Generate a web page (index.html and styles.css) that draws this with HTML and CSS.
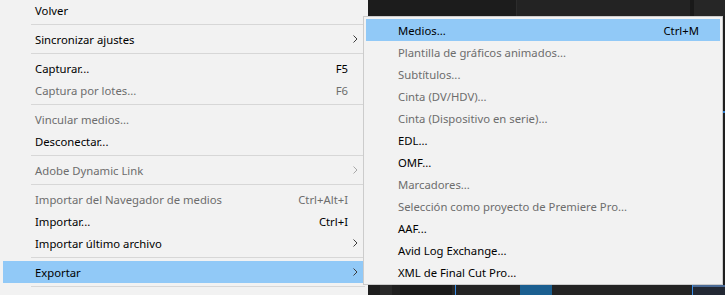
FILE: index.html
```html
<!DOCTYPE html>
<html lang="es">
<head>
<meta charset="utf-8">
<title>Menú Archivo</title>
<link rel="stylesheet" href="styles.css">
</head>
<body>
<div class="app">
  <div class="strip strip-top">
    <div class="pane t1"></div>
    <div class="pane t2"></div>
    <div class="pane t3"></div>
    <div class="pane t4"></div>
    <div class="pane t5"></div>
  </div>
  <div class="middle">
    <div class="middle-fill"></div>
    <div class="edge"><span class="edge-mark"></span></div>
  </div>
  <div class="strip strip-bottom">
    <div class="pane b0"></div>
    <div class="pane b1"></div>
    <div class="pane b2"></div>
    <div class="pane b3"></div>
    <div class="pane b4"></div>
    <div class="pane b5"></div>
    <div class="pane b6"></div>
    <div class="pane b7"></div>
    <div class="pane b8"></div>
    <div class="pane b9"></div>
    <div class="pane b10"></div>
  </div>
</div>

<div class="menu menu-main">
  <div class="item"><span class="label">Volver</span><span class="arrow"></span></div>
  <div class="sep"></div>
  <div class="item"><span class="label">Sincronizar ajustes</span><span class="arrow"><svg width="5" height="8" viewBox="0 0 5 8"><path d="M0.5 0.5 L4 4 L0.5 7.5" fill="none" stroke="#3c3c3c" stroke-width="1"/></svg></span></div>
  <div class="sep"></div>
  <div class="item"><span class="label">Capturar...</span><span class="key">F5</span><span class="arrow"></span></div>
  <div class="item disabled"><span class="label">Captura por lotes...</span><span class="key">F6</span><span class="arrow"></span></div>
  <div class="sep"></div>
  <div class="item disabled"><span class="label">Vincular medios...</span><span class="arrow"></span></div>
  <div class="item"><span class="label">Desconectar...</span><span class="arrow"></span></div>
  <div class="sep"></div>
  <div class="item disabled"><span class="label">Adobe Dynamic Link</span><span class="arrow"><svg width="5" height="8" viewBox="0 0 5 8"><path d="M0.5 0.5 L4 4 L0.5 7.5" fill="none" stroke="#a8a8a8" stroke-width="1"/></svg></span></div>
  <div class="sep"></div>
  <div class="item disabled"><span class="label">Importar del Navegador de medios</span><span class="key">Ctrl+Alt+I</span><span class="arrow"></span></div>
  <div class="item"><span class="label">Importar...</span><span class="key">Ctrl+I</span><span class="arrow"></span></div>
  <div class="item"><span class="label">Importar último archivo</span><span class="arrow"><svg width="5" height="8" viewBox="0 0 5 8"><path d="M0.5 0.5 L4 4 L0.5 7.5" fill="none" stroke="#3c3c3c" stroke-width="1"/></svg></span></div>
  <div class="sep"></div>
  <div class="item active"><span class="label">Exportar</span><span class="arrow"><svg width="5" height="8" viewBox="0 0 5 8"><path d="M0.5 0.5 L4 4 L0.5 7.5" fill="none" stroke="#3c3c3c" stroke-width="1"/></svg></span></div>
  <div class="sep"></div>
</div>

<div class="menu menu-sub">
  <div class="item active"><span class="label">Medios...</span><span class="key">Ctrl+M</span><span class="arrow"></span></div>
  <div class="item disabled"><span class="label">Plantilla de gráficos animados...</span><span class="arrow"></span></div>
  <div class="item disabled"><span class="label">Subtítulos...</span><span class="arrow"></span></div>
  <div class="item disabled"><span class="label">Cinta (DV/HDV)...</span><span class="arrow"></span></div>
  <div class="item disabled"><span class="label">Cinta (Dispositivo en serie)...</span><span class="arrow"></span></div>
  <div class="item"><span class="label">EDL...</span><span class="arrow"></span></div>
  <div class="item"><span class="label">OMF...</span><span class="arrow"></span></div>
  <div class="item disabled"><span class="label">Marcadores...</span><span class="arrow"></span></div>
  <div class="item disabled"><span class="label">Selección como proyecto de Premiere Pro...</span><span class="arrow"></span></div>
  <div class="item"><span class="label">AAF...</span><span class="arrow"></span></div>
  <div class="item"><span class="label">Avid Log Exchange...</span><span class="arrow"></span></div>
  <div class="item"><span class="label">XML de Final Cut Pro...</span><span class="arrow"></span></div>
</div>
</body>
</html>
```

FILE: styles.css
```css
html, body {
  margin: 0;
  padding: 0;
}
body {
  width: 725px;
  height: 295px;
  overflow: hidden;
  background: #1e1e1e;
  position: relative;
  font-family: "Noto Sans", "Open Sans", sans-serif;
  font-size: 11.3px;
}

/* background application (mostly hidden) */
.app {
  display: flex;
  flex-direction: column;
  height: 295px;
}
.strip {
  display: flex;
  flex: none;
}
.strip-top { height: 16px; }
.strip-bottom { height: 10px; }
.pane { flex: none; height: 100%; }
.t1 { width: 516px; background: #1c1c1c; }
.t2 { width: 1px; background: #2c2c2c; }
.t3 { width: 173px; background: #232323; }
.t4 { width: 4px; background: #191919; }
.t5 { flex: 1; background: #262626; }

.middle {
  flex: 1;
  display: flex;
}
.middle-fill { flex: 1; background: #1e1e1e; }
.edge {
  width: 3px;
  background: #1f1f1f;
  display: flex;
  flex-direction: column;
  padding-top: 95px;
}
.edge-mark {
  display: block;
  height: 2px;
  background: #2f7fd0;
}

.b0 { width: 380px; background: #1e1e1e; }
.b1 { width: 12px; background: #2a2a2a; }
.b2 { width: 8px; background: #202020; }
.b3 { width: 52px; background: #1a1a1a; }
.b4 { width: 3px; background: #272727; }
.b5 { width: 1px; background: #3a8ee6; }
.b6 { width: 64px; background: #232323; }
.b7 { width: 32px; background: #1b5f90; }
.b8 { width: 140px; background: #232323; }
.b9 { width: 1px; background: #3a8ee6; }
.b10 { flex: 1; background: #222833; border-top: 2px solid #4a6a95; box-sizing: border-box; }

/* menus */
.menu {
  position: absolute;
  background: #f2f2f2;
  color: #000;
  box-sizing: border-box;
}
.menu-main {
  left: 0;
  top: -1px;
  width: 368px;
  height: 296px;
  padding: 0 3px;
}
.menu-sub {
  left: 363px;
  top: 16px;
  width: 360px;
  height: 269px;
  border: 1px solid #cccccc;
  padding: 2px 2px 1px 2px;
}

.item {
  display: flex;
  align-items: center;
  height: 22px;
  padding-left: 32px;
  white-space: nowrap;
}
.item .label { flex: 1; }
.item .key { flex: none; }
.item .arrow {
  flex: none;
  width: 12px;
  padding-left: 5px;
  display: flex;
  align-items: center;
}
.item .arrow svg { display: block; }
.menu-sub .item .arrow { width: 16px; }
.item.disabled { color: #6d6d6d; }
.item.active { background: #91c9f7; }

.sep {
  height: 1px;
  margin: 3px 0 3px 28px;
  background: #d7d7d7;
}
```
